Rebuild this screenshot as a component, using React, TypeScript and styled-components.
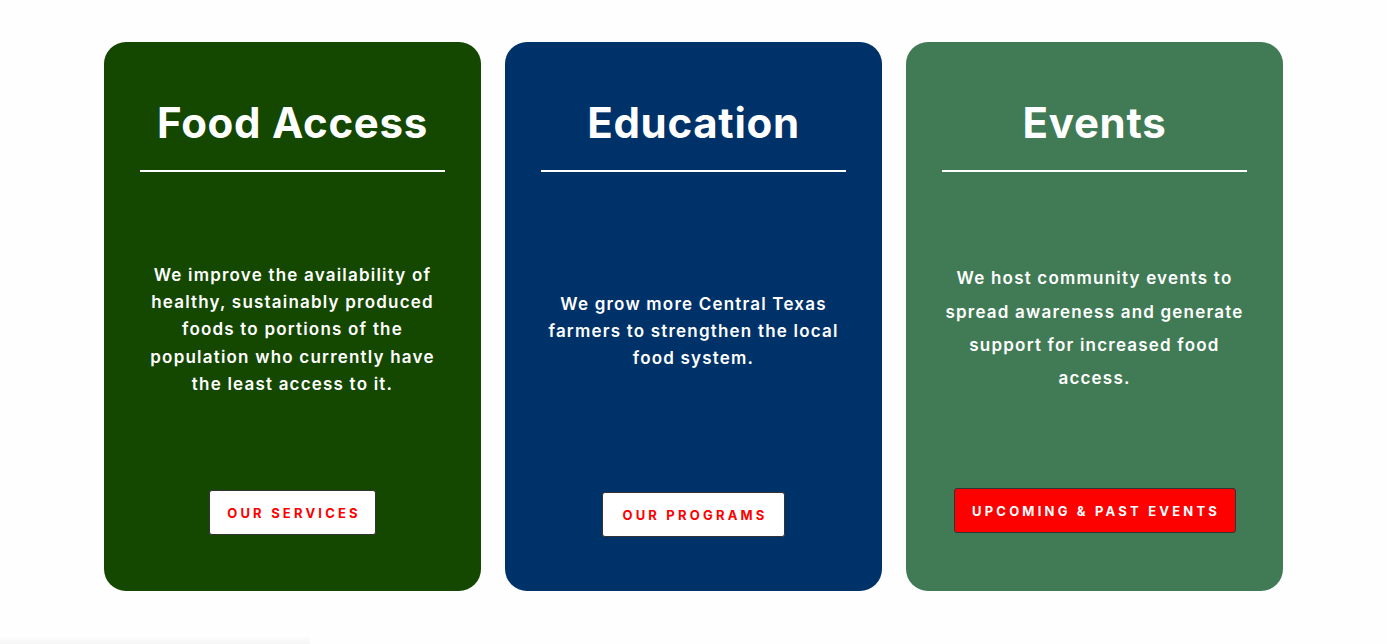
import React from "react";
import styled, { createGlobalStyle } from "styled-components";

const Global = createGlobalStyle`
  html, body { margin: 0; padding: 0; background: #fefefe; }
  body { font-family: Inter, "DejaVu Sans", sans-serif; }
`;

const Page = styled.div`
  width: 1387px;
  height: 644px;
  box-sizing: border-box;
  padding-top: 42px;
  display: flex;
  justify-content: center;
  position: relative;
  overflow: hidden;
`;

const Row = styled.div`
  display: grid;
  grid-template-columns: repeat(3, 377px);
  gap: 24px;
`;

const Card = styled.div<{ $bg: string }>`
  background: ${(p) => p.$bg};
  height: 549px;
  border-radius: 22px;
  box-sizing: border-box;
  padding: 0 36px;
  display: flex;
  flex-direction: column;
  align-items: stretch;
  color: #fff;
`;

const Title = styled.h2`
  margin: 56px 0 0;
  font-family: Inter, "DejaVu Sans", sans-serif;
  font-weight: 700;
  font-size: 42px;
  line-height: 50px;
  text-align: center;
  letter-spacing: 0.7px;
`;

const Divider = styled.div`
  height: 2px;
  background: #fff;
  margin-top: 22px;
`;

const Middle = styled.div`
  flex: 1;
  display: flex;
  align-items: center;
  justify-content: center;
  padding-bottom: 2px;
`;

const Body = styled.p<{ $lh: number }>`
  margin: 0;
  font-family: Inter, "DejaVu Sans", sans-serif;
  font-weight: 600;
  font-size: 17px;
  line-height: ${(p) => p.$lh}px;
  letter-spacing: 1.2px;
  text-align: center;
  white-space: nowrap;
`;

const ButtonWrap = styled.div<{ $mb: number }>`
  display: flex;
  justify-content: center;
  margin-bottom: ${(p) => p.$mb}px;
`;

const Button = styled.a<{ $red?: boolean; $w: number }>`
  display: flex;
  align-items: center;
  justify-content: center;
  width: ${(p) => p.$w}px;
  height: 45px;
  box-sizing: border-box;
  padding-left: 3px;
  border-radius: 3px;
  border: 1px solid #333;
  background: ${(p) => (p.$red ? "#fd0000" : "#ffffff")};
  color: ${(p) => (p.$red ? "#ffffff" : "#fd0000")};
  font-family: Inter, "DejaVu Sans", sans-serif;
  font-weight: 700;
  font-size: 13px;
  letter-spacing: 3.2px;
  text-transform: uppercase;
  text-decoration: none;
`;

const Shadow = styled.div`
  position: absolute;
  left: 0;
  bottom: 0;
  width: 310px;
  height: 8px;
  background: linear-gradient(to bottom, rgba(0,0,0,0), rgba(0,0,0,0.035));
`;

const cards = [
  {
    bg: "#144700",
    title: "Food Access",
    lines: [
      "We improve the availability of",
      "healthy, sustainably produced",
      "foods to portions of the",
      "population who currently have",
      "the least access to it.",
    ],
    lh: 27.2,
    btn: "Our Services",
    w: 167,
    red: false,
    mb: 56,
  },
  {
    bg: "#00326a",
    title: "Education",
    lines: [
      "We grow more Central Texas",
      "farmers to strengthen the local",
      "food system.",
    ],
    lh: 27,
    btn: "Our Programs",
    w: 183,
    red: false,
    mb: 54,
  },
  {
    bg: "#417b55",
    title: "Events",
    lines: [
      "We host community events to",
      "spread awareness and generate",
      "support for increased food",
      "access.",
    ],
    lh: 33.4,
    btn: "Upcoming & Past Events",
    w: 282,
    red: true,
    mb: 58,
  },
];

export default function App() {
  return (
    <>
      <Global />
      <Page>
        <Row>
          {cards.map((c) => (
            <Card key={c.title} $bg={c.bg}>
              <Title>{c.title}</Title>
              <Divider />
              <Middle>
                <Body $lh={c.lh}>
                  {c.lines.map((l, i) => (
                    <React.Fragment key={i}>
                      {l}
                      {i < c.lines.length - 1 && <br />}
                    </React.Fragment>
                  ))}
                </Body>
              </Middle>
              <ButtonWrap $mb={c.mb}>
                <Button href="#" $red={c.red} $w={c.w}>
                  {c.btn}
                </Button>
              </ButtonWrap>
            </Card>
          ))}
        </Row>
        <Shadow />
      </Page>
    </>
  );
}
